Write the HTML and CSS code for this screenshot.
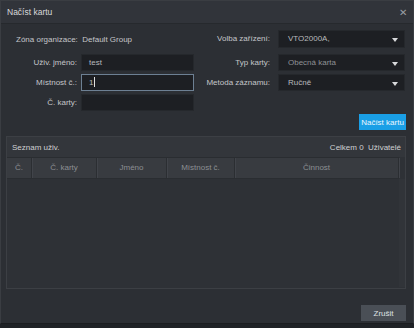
FILE: index.html
```html
<!doctype html>
<html>
<head>
    <meta charset="UTF-8">
    <title>Načíst kartu</title>
    <link rel="stylesheet" href="styles.css">
</head>
<body>
    <div class="dialog">
        <div class="title-bar">
            <span>Načíst kartu</span>
            <span class="close">&#x2715;</span>
        </div>

        <div class="form-grid">
            <div class="zone">Zóna organizace:&nbsp; Default Group</div>
            <label class="lbl lbl-r first">Volba zařízení:</label>
            <div class="select first">VTO2000A,</div>

            <label class="lbl">Uživ. jméno:</label>
            <div class="input">test</div>
            <label class="lbl lbl-r">Typ karty:</label>
            <div class="select dim">Obecná karta</div>

            <label class="lbl">Místnost č.:</label>
            <div class="input active">1<span class="caret"></span></div>
            <label class="lbl lbl-r">Metoda záznamu:</label>
            <div class="select">Ručně</div>

            <label class="lbl">Č. karty:</label>
            <div class="input"></div>
        </div>

        <div class="actions">
            <button class="btn-blue">Načíst kartu</button>
        </div>

        <div class="panel">
            <div class="panel-head">
                <span>Seznam uživ.</span>
                <span>Celkem 0&nbsp; Uživatelé</span>
            </div>
            <div class="table-head">
                <div class="col c-no">Č.</div>
                <div class="col c-card">Č. karty</div>
                <div class="col c-name">Jméno</div>
                <div class="col c-room">Místnost č.</div>
                <div class="col c-act">Činnost</div>
            </div>
            <div class="table-body"></div>
        </div>

        <div class="footer">
            <button class="btn-gray">Zrušit</button>
        </div>
    </div>
</body>
</html>
```

FILE: styles.css
```css
body {
    margin: 0;
    background: #1f2226;
    font-family: "Liberation Sans", Arial, sans-serif;
    font-size: 8px;
    color: #c4c6c9;
}
.dialog {
    width: 412px;
    height: 322px;
    border: 1px solid #3a3d42;
    border-bottom-color: #1b1d20;
    background: #2c2f34;
}
.title-bar {
    height: 22px;
    background: #31343a;
    border-bottom: 1px solid #26292d;
    display: flex;
    align-items: center;
    justify-content: space-between;
    padding: 0 6px;
    color: #d8d9db;
    font-size: 8.5px;
}
.close {
    color: #9b9ea3;
    font-size: 10px;
}
.form-grid {
    display: grid;
    grid-template-columns: 75px 113px 84px 127px;
    grid-template-rows: 18px 23px 20px 20px;
    align-items: end;
    margin-top: 6px;
    margin-left: 5px;
    white-space: nowrap;
}
.form-grid .zone {
    grid-column: 1 / 3;
    align-self: center;
    padding-left: 10px;
}
.lbl {
    text-align: right;
    padding-right: 4px;
    line-height: 17px;
}
.lbl-r {
    padding-right: 8px;
}
.lbl.first {
    align-self: center;
    line-height: 18px;
}
.input,
.select {
    height: 17px;
    box-sizing: border-box;
    background: #1d1f23;
    border: 1px solid #25282c;
    padding-left: 7px;
    line-height: 15px;
    color: #b8babd;
}
.select {
    position: relative;
    padding-left: 9px;
}
.select.first {
    height: 18px;
    align-self: center;
    line-height: 16px;
}
.select::after {
    content: "";
    position: absolute;
    right: 6px;
    top: 50%;
    margin-top: -1px;
    border-left: 3px solid transparent;
    border-right: 3px solid transparent;
    border-top: 4px solid #d8d9db;
}
.select.dim {
    color: #8e9195;
}
.input.active {
    border-color: #6d8093;
}
.caret {
    display: inline-block;
    width: 1px;
    height: 10px;
    background: #e0e0e0;
    vertical-align: -2px;
    margin-left: 1px;
}
.actions {
    display: flex;
    justify-content: flex-end;
    padding: 3px 7px 0 0;
}
button {
    font-family: "Liberation Sans", Arial, sans-serif;
    font-size: 8px;
    border: none;
    padding: 0;
    white-space: nowrap;
    cursor: pointer;
}
.btn-blue {
    width: 47px;
    height: 16px;
    background: #1a9fe6;
    color: #eaf6ff;
}
.panel {
    margin: 6px 7px 0 5px;
    height: 151px;
    border: 1px solid #3c3f44;
    background: #2e3136;
}
.panel-head {
    height: 20px;
    background: #33363b;
    display: flex;
    align-items: center;
    justify-content: space-between;
    padding: 0 4px 0 5px;
    color: #cfd0d2;
}
.table-head {
    display: flex;
    height: 20px;
    margin-right: 6px;
    background: #383b40;
    border-top: 1px solid #2a2d31;
    border-bottom: 1px solid #2a2d31;
}
.col {
    text-align: center;
    line-height: 20px;
    color: #8c8f93;
    border-right: 1px solid #2b2e32;
    box-shadow: 1px 0 0 #41444a;
}
.c-no { width: 24px; }
.c-card { width: 64px; }
.c-name { width: 69px; }
.c-room { width: 67px; }
.c-act { flex: 1; }
.table-body {
    height: 108px;
    border-right: 6px solid #313439;
}
.footer {
    display: flex;
    justify-content: flex-end;
    padding: 16px 7px 0 0;
}
.btn-gray {
    width: 45px;
    height: 16px;
    background: #4a4f56;
    color: #dfe1e3;
}
```
